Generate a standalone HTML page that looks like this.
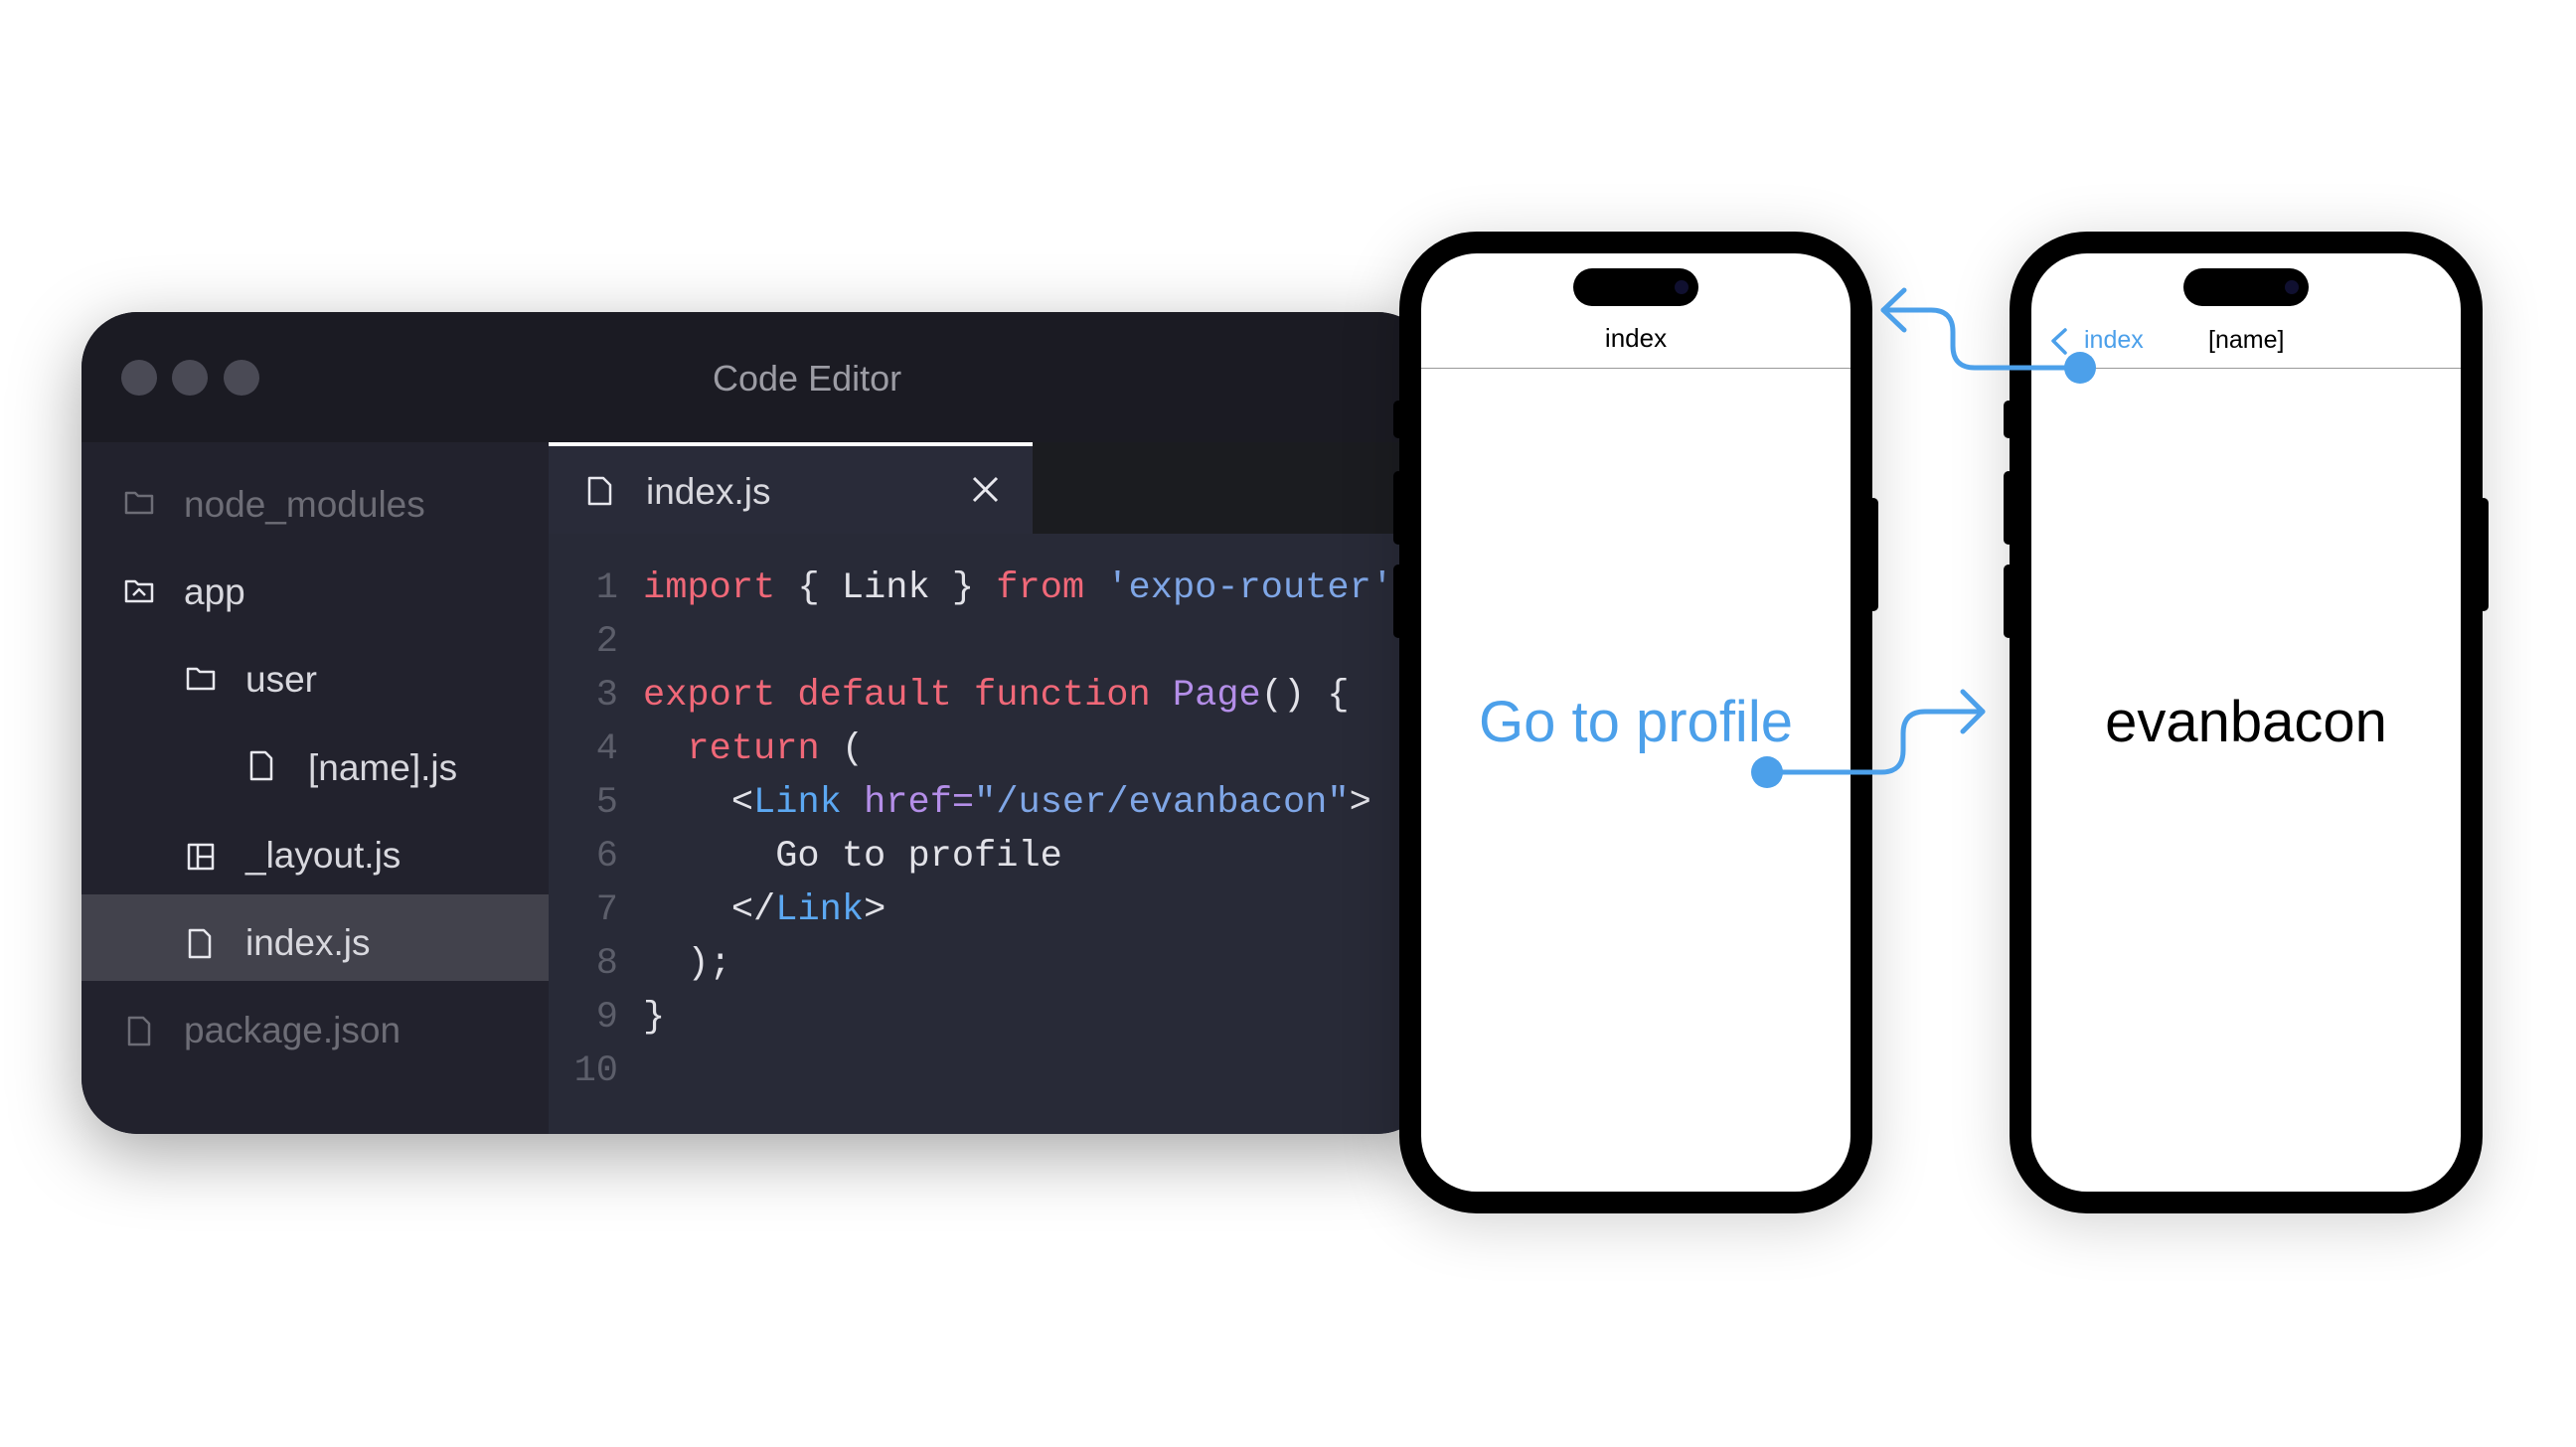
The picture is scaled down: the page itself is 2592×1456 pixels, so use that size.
<!DOCTYPE html>
<html><head><meta charset="utf-8"><style>
*{margin:0;padding:0;box-sizing:border-box}
body{width:2592px;height:1456px;background:#fff;position:relative;overflow:hidden;font-family:"Liberation Sans",sans-serif}
.abs{position:absolute}
.ed{left:82px;top:314px;width:1360px;height:827px;border-radius:56px;overflow:hidden;background:#22222d;box-shadow:0 20px 70px rgba(0,0,0,0.35)}
.title{left:0;top:0;width:100%;height:131px;background:#1b1b23}
.dot{width:36px;height:36px;border-radius:50%;background:#4a4a55;top:48px}
.side{left:0;top:131px;width:470px;height:696px;background:#22222d}
.code{left:470px;top:131px;width:900px;height:696px;background:#282a37}
.tabdark{left:487px;top:0;width:500px;height:92px;background:#1b1c20}
.tab{left:0;top:0;width:487px;height:92px;background:#292b39;border-top:4px solid #fff}
.si{font-size:37px;color:#d8d8de;line-height:40px}
.mono{font-family:"Liberation Mono",monospace;font-size:37px;line-height:40px;white-space:pre;color:#e2e2e8}
.k{color:#f06878}.s{color:#7fa6e6}.p{color:#b48ee8}.l{color:#5ca8f2}
.ln{color:#5c5e6a;width:60px;text-align:right}
.phone{width:476px;height:988px;border:22px solid #000;border-radius:78px;background:#fff;box-shadow:0 10px 60px rgba(0,0,0,0.18)}
.btn{background:#000;border-radius:5px}
.island{width:126px;height:38px;border-radius:19px;background:#000}
.cam{width:14px;height:14px;border-radius:50%;background:#101030;top:12px;right:10px}
</style></head><body>

<div class="abs ed">
  <div class="abs title">
    <div class="abs dot" style="left:40px"></div>
    <div class="abs dot" style="left:91px"></div>
    <div class="abs dot" style="left:143px"></div>
    <div class="abs" style="left:635px;top:46px;font-size:36px;color:#9c9ca4">Code Editor</div>
  </div>
  <div class="abs side">
    <div class="abs" style="left:0;top:455px;width:470px;height:87px;background:#42424c"></div>
  </div>
  <div class="abs code">
    <div class="abs tabdark"></div>
    <div class="abs tab"></div>
  </div>
</div>

<svg class="abs" style="left:0;top:0" width="1440" height="1456" fill="none" stroke-width="2.5" stroke-linejoin="round">
  <g stroke="#6d6d76"><path d="M127 496h9l3 3h14v17h-26z"/></g>
  <g stroke="#e8e8ee">
    <path d="M127 585h9l3 3h14v17h-26z"/><path d="M134 599l6-6 6 6"/>
    <path d="M189 673h9l3 3h14v17h-26z"/>
    <path d="M253 757h14l6 6v21h-20z"/>
    <rect x="190" y="850" width="24" height="24"/><path d="M199 850v24M199 862h15"/>
    <path d="M191 936h14l6 6v21h-20z"/>
    <path d="M593 481h14l7 7v19h-21z"/>
    <path d="M980 481l23 23M1003 481l-23 23" stroke-width="3"/>
  </g>
  <g stroke="#6d6d76"><path d="M130 1024h14l6 6v21h-20z"/></g>
</svg>
<div class="abs si" style="left:185px;top:488px;color:#6d6d76">node_modules</div>
<div class="abs si" style="left:185px;top:576px">app</div>
<div class="abs si" style="left:247px;top:664px">user</div>
<div class="abs si" style="left:310px;top:753px">[name].js</div>
<div class="abs si" style="left:247px;top:841px">_layout.js</div>
<div class="abs si" style="left:247px;top:929px">index.js</div>
<div class="abs si" style="left:185px;top:1017px;color:#6d6d76">package.json</div>
<div class="abs si" style="left:650px;top:475px">index.js</div>

<div class="abs mono" style="left:562px;top:572px">
<div class="abs ln" style="left:0;top:0">1</div>
<div class="abs ln" style="left:0;top:54px">2</div>
<div class="abs ln" style="left:0;top:108px">3</div>
<div class="abs ln" style="left:0;top:162px">4</div>
<div class="abs ln" style="left:0;top:216px">5</div>
<div class="abs ln" style="left:0;top:270px">6</div>
<div class="abs ln" style="left:0;top:324px">7</div>
<div class="abs ln" style="left:0;top:378px">8</div>
<div class="abs ln" style="left:0;top:432px">9</div>
<div class="abs ln" style="left:0;top:486px">10</div>
<div class="abs" style="left:85px;top:0"><span class="k">import</span> { Link } <span class="k">from</span> <span class="s">'expo-router'</span></div>
<div class="abs" style="left:85px;top:108px"><span class="k">export default function</span> <span class="p">Page</span>() {</div>
<div class="abs" style="left:85px;top:162px">  <span class="k">return</span> (</div>
<div class="abs" style="left:85px;top:216px">    &lt;<span class="l">Link</span> <span class="p">href=</span><span class="s">"/user/evanbacon"</span>&gt;</div>
<div class="abs" style="left:85px;top:270px">      Go to profile</div>
<div class="abs" style="left:85px;top:324px">    &lt;/<span class="l">Link</span>&gt;</div>
<div class="abs" style="left:85px;top:378px">  );</div>
<div class="abs" style="left:85px;top:432px">}</div>
</div>

<!-- phone 1 -->
<div class="abs btn" style="left:1402px;top:403px;width:10px;height:38px"></div>
<div class="abs btn" style="left:1402px;top:474px;width:10px;height:74px"></div>
<div class="abs btn" style="left:1402px;top:568px;width:10px;height:74px"></div>
<div class="abs btn" style="left:1880px;top:501px;width:10px;height:114px"></div>
<div class="abs phone" style="left:1408px;top:233px">
  <div class="abs island" style="left:153px;top:15px"><div class="abs cam"></div></div>
  <div class="abs" style="left:0;top:70px;width:432px;text-align:center;font-size:26px;color:#000">index</div>
  <div class="abs" style="left:0;top:115px;width:432px;height:1px;background:#999"></div>
  <div class="abs" style="left:0;top:438px;width:432px;text-align:center;font-size:58px;color:#4ca0ea">Go to profile</div>
</div>

<!-- phone 2 -->
<div class="abs btn" style="left:2016px;top:403px;width:10px;height:38px"></div>
<div class="abs btn" style="left:2016px;top:474px;width:10px;height:74px"></div>
<div class="abs btn" style="left:2016px;top:568px;width:10px;height:74px"></div>
<div class="abs btn" style="left:2494px;top:501px;width:10px;height:114px"></div>
<div class="abs phone" style="left:2022px;top:233px">
  <div class="abs island" style="left:153px;top:15px"><div class="abs cam"></div></div>
  <div class="abs" style="left:53px;top:73px;font-size:25px;color:#4ca0ea">index</div>
  <div class="abs" style="left:178px;top:73px;font-size:25px;color:#000">[name]</div>
  <div class="abs" style="left:0;top:115px;width:432px;height:1px;background:#999"></div>
  <div class="abs" style="left:0;top:438px;width:432px;text-align:center;font-size:58px;color:#000">evanbacon</div>
</div>

<svg class="abs" style="left:0;top:0" width="2592" height="1456" fill="none" stroke="#4ca0ea" stroke-width="5" stroke-linecap="round" stroke-linejoin="round">
  <path d="M2066 343l12-11M2066 343l12 12" stroke-width="3.5"/>
  <path d="M2093 370H1987q-22 0-22-22v-14q0-22-22-22H1895"/>
  <path d="M1916 292l-21 20 21 20"/>
  <circle cx="2093" cy="370" r="16" fill="#4ca0ea" stroke="none"/>
  <path d="M1778 777H1893q22 0 22-22v-17q0-22 22-22H1995"/>
  <path d="M1975 696l20 20-20 20"/>
  <circle cx="1778" cy="777" r="16" fill="#4ca0ea" stroke="none"/>
</svg>
</body></html>
